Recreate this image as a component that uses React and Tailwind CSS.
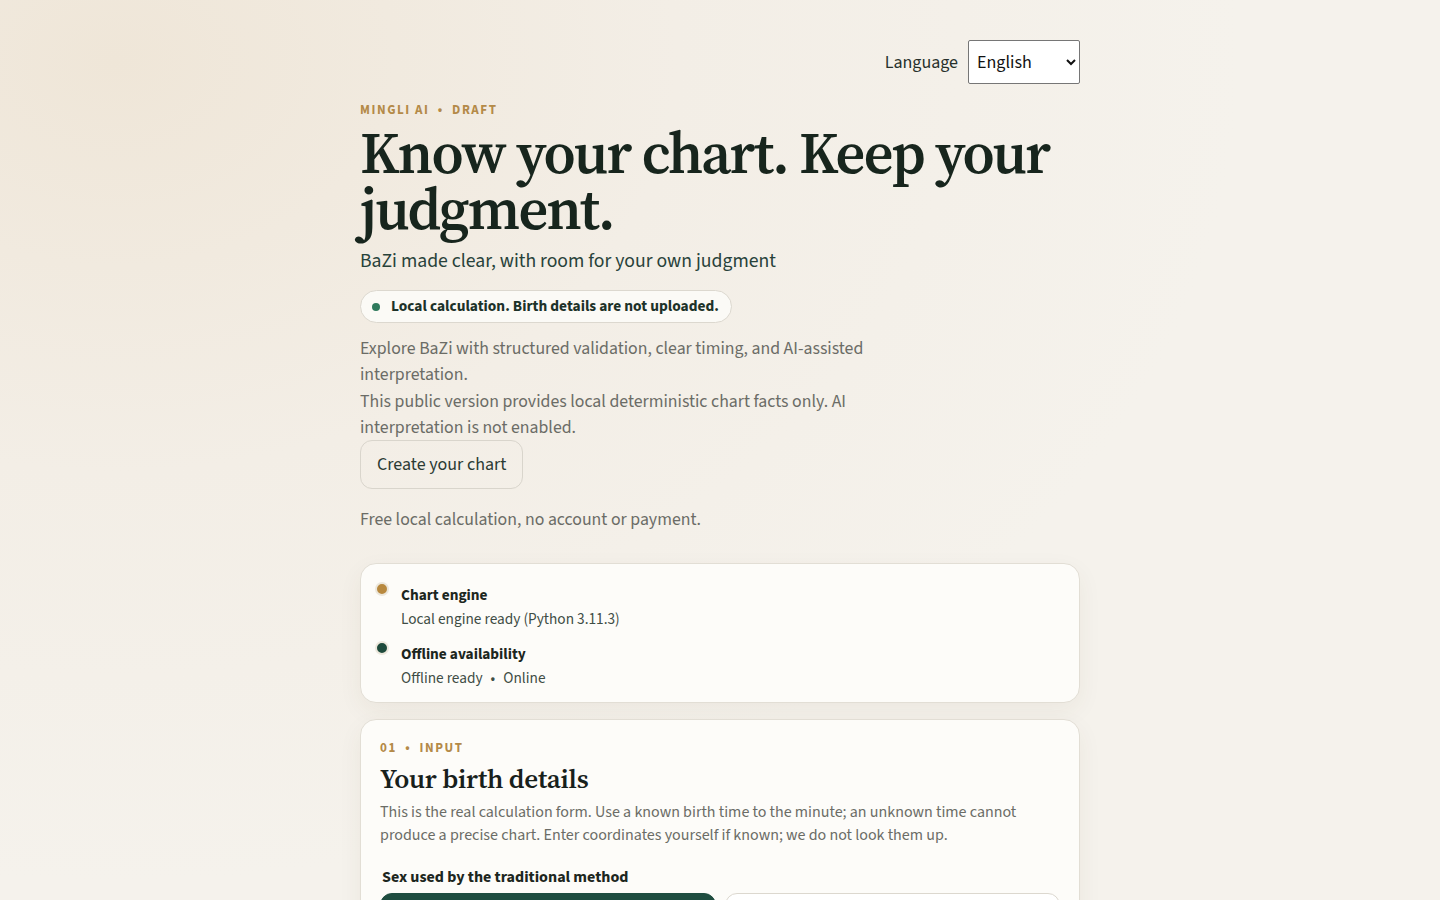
import React, { useState } from 'react';

const sans = "font-['Source_Sans_3','Source_Sans_Pro','Lato',sans-serif]";
const serif = "font-['Source_Serif_4','Source_Serif_Pro','Liberation_Serif',serif]";

function StatusItem({ dot, title, children }) {
  return (
    <div className="flex gap-[12px]">
      <span className={`h-[14px] w-[14px] shrink-0 rounded-full border-[2px] border-[#ece7dc] ${dot}`} />
      <div className="pt-[3px]">
        <div className="text-[15.3px] font-bold leading-[20px] text-[#1c2620]">{title}</div>
        <div className="mt-[4px] text-[15.3px] leading-[20px] text-[#3f4d45]">{children}</div>
      </div>
    </div>
  );
}

export default function App() {
  const [lang, setLang] = useState('en');
  const [sex, setSex] = useState('male');

  return (
    <div className={`min-h-screen bg-[#f5f2ec] bg-[radial-gradient(ellipse_at_8%_6%,#efe6d8_0%,#f3eee6_30%,transparent_60%)] ${sans}`}>
      <div className="mx-auto w-[720px] pt-[40px] pb-16">
        {/* Language */}
        <div className="flex items-center justify-end gap-[10px]">
          <label htmlFor="lang" className="text-[18px] text-[#26302b]">Language</label>
          <select
            id="lang"
            value={lang}
            onChange={(e) => setLang(e.target.value)}
            className="h-[44px] w-[112px] rounded-[2px] border border-[#767676] bg-white pl-[4px] text-[18px] text-[#111]"
          >
            <option value="en">English</option>
            <option value="zh">中文</option>
          </select>
        </div>

        {/* Hero */}
        <div className="mt-[17px] whitespace-pre text-[13px] font-bold uppercase leading-[18px] tracking-[0.12em] text-[#b48a48]">
          {'Mingli AI  •  Draft'}
        </div>
        <h1 className={`mt-[6px] text-[58px] font-semibold leading-[56px] tracking-[-0.03em] text-[#17251d] ${serif}`}>
          Know your chart. Keep your judgment.
        </h1>
        <p className="mt-[10px] text-[19.7px] leading-[28px] text-[#28423a]">BaZi made clear, with room for your own judgment</p>

        <div className="mt-[15px] inline-flex h-[33px] items-center gap-[11px] rounded-full border border-[#dcd8cf] bg-[#fbfaf6] pl-[11px] pr-[12px]">
          <span className="h-[8px] w-[8px] rounded-full bg-[#2f7a5c]" />
          <span className="text-[15.4px] font-bold text-[#1d3229]">Local calculation. Birth details are not uploaded.</span>
        </div>

        <p className="mt-[13px] max-w-[530px] text-[17.8px] leading-[26.3px] text-[#6b6c66]">
          Explore BaZi with structured validation, clear timing, and AI-assisted interpretation.
          <br />
          This public version provides local deterministic chart facts only. AI interpretation is not enabled.
        </p>

        <button className="-mt-px h-[49px] rounded-[12px] border border-[#d9d5cc] px-[16px] text-[18px] text-[#2b3a33]">
          Create your chart
        </button>

        <p className="mt-[18px] text-[17.8px] leading-[26px] text-[#6b6c66]">Free local calculation, no account or payment.</p>

        {/* Status card */}
        <div className="mt-[30px] flex flex-col gap-[12px] rounded-[16px] border border-[#e2ded5] bg-[#fdfcf9] px-[14px] pt-[18px] pb-[14px] shadow-[0_8px_24px_rgba(80,60,30,0.06)]">
          <StatusItem dot="bg-[#b8893f]" title="Chart engine">
            Local engine ready (Python 3.11.3)
          </StatusItem>
          <StatusItem dot="bg-[#1e4a3c]" title="Offline availability">
            Offline ready <span className="mx-[5px]">•</span> Online
          </StatusItem>
        </div>

        {/* Form card */}
        <div className="mt-[16px] rounded-[16px] border border-[#e2ded5] bg-[#fdfcf9] px-[19px] pt-[19px] pb-6 shadow-[0_8px_24px_rgba(80,60,30,0.06)]">
          <div className="whitespace-pre text-[13px] font-bold uppercase leading-[18px] tracking-[0.12em] text-[#b48a48]">
            {'01  •  Input'}
          </div>
          <h2 className={`mt-[4px] text-[27px] font-semibold leading-[36px] tracking-[-0.01em] text-[#17201b] ${serif}`}>Your birth details</h2>
          <p className="mt-[4px] text-[16px] leading-[23px] text-[#6b6c66]">
            This is the real calculation form. Use a known birth time to the minute; an unknown time cannot produce a
            precise chart. Enter coordinates yourself if known; we do not look them up.
          </p>

          <div className="mt-[18px] pl-[2px] text-[16px] font-bold leading-[24px] text-[#1c2620]">Sex used by the traditional method</div>
          <div className="mt-[4px] grid grid-cols-2 gap-[9px]">
            <button
              onClick={() => setSex('male')}
              className={`h-[46px] rounded-[12px] border text-[16px] font-bold ${sex === 'male' ? 'border-[#1f4d40] bg-[#1f4d40] text-white' : 'border-[#dcd8cf] bg-white text-[#2b3a33]'}`}
            >
              Male
            </button>
            <button
              onClick={() => setSex('female')}
              className={`h-[46px] rounded-[12px] border text-[16px] font-bold ${sex === 'female' ? 'border-[#1f4d40] bg-[#1f4d40] text-white' : 'border-[#dcd8cf] bg-white text-[#2b3a33]'}`}
            >
              Female
            </button>
          </div>
        </div>
      </div>
    </div>
  );
}
